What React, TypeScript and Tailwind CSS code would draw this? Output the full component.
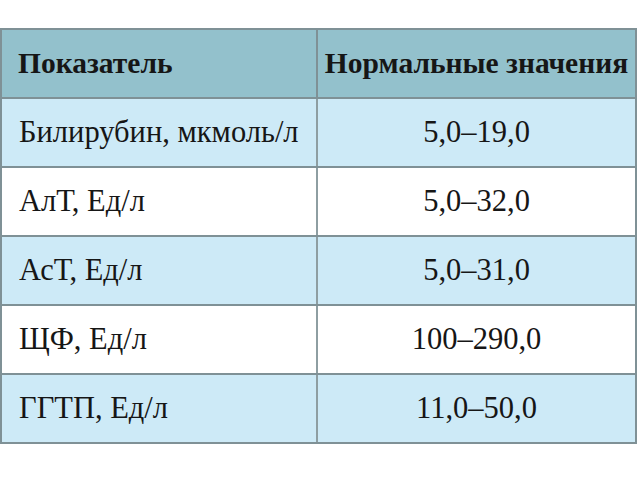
const rows = [
  { name: 'Билирубин, мкмоль/л', value: '5,0–19,0', tint: true },
  { name: 'АлТ, Ед/л', value: '5,0–32,0', tint: false },
  { name: 'АсТ, Ед/л', value: '5,0–31,0', tint: true },
  { name: 'ЩФ, Ед/л', value: '100–290,0', tint: false },
  { name: 'ГГТП, Ед/л', value: '11,0–50,0', tint: true },
]

export default function App() {
  return (
    <div className="w-[640px] h-[481px] bg-white pt-[28px] text-[#161616]">
      <div className="w-[637px] border-2 border-[#7f9196]">
        <div className="grid grid-cols-[316px_1fr] h-[67px] bg-[#93c1cc]">
          <div className="flex items-center pl-[16px] border-r-2 border-[#7f9196] font-[family-name:'Liberation_Serif',serif] font-bold text-[29.5px]">
            Показатель
          </div>
          <div className="flex items-center justify-center font-[family-name:'Liberation_Serif',serif] font-bold text-[29.5px]">
            Нормальные значения
          </div>
        </div>
        {rows.map((r) => (
          <div
            key={r.name}
            className={`grid grid-cols-[316px_1fr] h-[69px] border-t-2 border-[#7f9196] ${r.tint ? 'bg-[#cdeaf7]' : 'bg-white'}`}
          >
            <div className="flex items-center pl-[17px] border-r-2 border-[#8e9ea2] font-[family-name:'Liberation_Serif',serif] text-[30.5px]">
              {r.name}
            </div>
            <div className="flex items-center justify-center font-[family-name:'Liberation_Serif',serif] text-[30.5px]">
              {r.value}
            </div>
          </div>
        ))}
      </div>
    </div>
  )
}
